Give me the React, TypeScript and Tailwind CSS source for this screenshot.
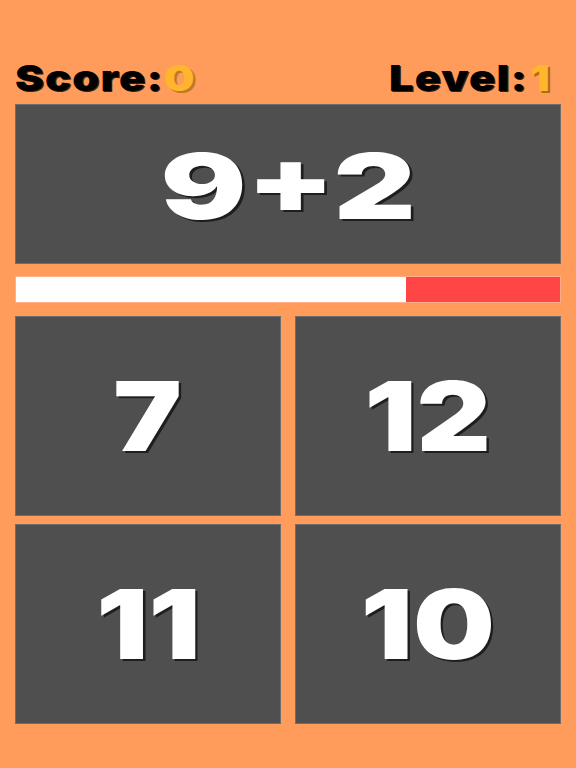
import React from "react";

const font = { fontFamily: "Inter, 'Open Sans', sans-serif" };

function Answer({ value }: { value: string }) {
  return (
    <div className="h-[200px] bg-[#4f4f4f] border border-[#6e6e6e] flex items-center justify-center">
      <span className="inline-block text-[96px] leading-none font-black text-white scale-x-[1.2] [text-shadow:2px_2px_0_#1e1e1e]">
        {value}
      </span>
    </div>
  );
}

export default function App() {
  return (
    <div className="w-[576px] h-[768px] bg-[#ff9c5c] px-[15px] overflow-hidden" style={font}>
      <div className="h-[104px] flex items-end justify-between pb-[8px] text-[36px] leading-none font-black">
        <div className="inline-block origin-left scale-x-[1.2] text-black tracking-[1px] [text-shadow:1px_1px_0_#3a2010]">
          Score:<span className="text-[#ffb52e] [text-shadow:2px_2px_0_#c07a20]">0</span>
        </div>
        <div className="inline-block origin-right scale-x-[1.2] text-black tracking-[1px] mr-[10px] [text-shadow:1px_1px_0_#3a2010]">
          Level:<span className="text-[#ffb52e] ml-[2px] [text-shadow:2px_2px_0_#b06a10]">1</span>
        </div>
      </div>
      <div className="h-[160px] bg-[#4f4f4f] border border-[#6e6e6e] flex items-center justify-center pt-[4px]">
        <span className="inline-block text-[91px] leading-none font-black text-white scale-x-[1.4] [text-shadow:2px_2px_0_#1e1e1e]">
          9+2
        </span>
      </div>
      <div className="mt-[12px] h-[27px] flex border border-[#ffb08a]">
        <div className="bg-white h-full w-[71.6%]" />
        <div className="bg-[#ff4545] h-full flex-1" />
      </div>
      <div className="mt-[13px] grid grid-cols-2 gap-x-[14px] gap-y-[8px]">
        <Answer value="7" />
        <Answer value="12" />
        <Answer value="11" />
        <Answer value="10" />
      </div>
    </div>
  );
}
